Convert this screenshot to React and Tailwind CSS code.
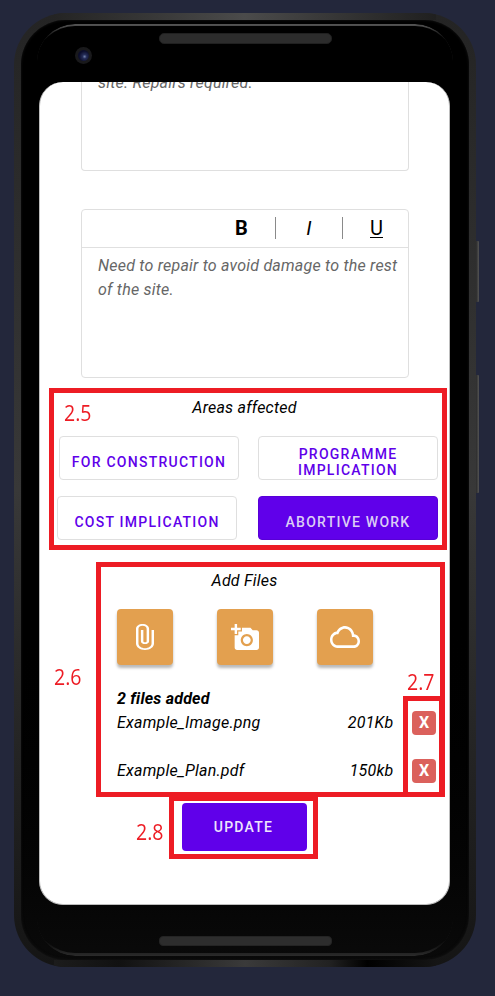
const outlineButton =
  'flex h-11 w-[180px] items-center justify-center rounded-[4px] border border-[#dfdfdf] px-8 pt-2 text-center text-sm leading-4 font-medium tracking-[1.25px] text-[#6000ea]';

function Toolbar() {
  return (
    <div className="flex h-[38px] items-center justify-end border-b border-[#e0e0e0] pb-[2px] text-[20px] leading-none text-black">
      <span className="w-[67px] text-center font-bold">B</span>
      <span className="h-[22px] w-px bg-[#8a8a8a]" />
      <span className="w-[66px] text-center italic">I</span>
      <span className="h-[22px] w-px bg-[#8a8a8a]" />
      <span className="flex w-[65px] justify-center pt-px pl-[2px]">
        <span className="border-b border-black leading-[18px]">U</span>
      </span>
    </div>
  );
}

function Tile({ children }) {
  return (
    <button className="flex size-14 items-center justify-center rounded-[4px] bg-[#e3a04f] text-white shadow-[0_3px_3px_rgba(0,0,0,0.28)]">
      {children}
    </button>
  );
}

function FileRow({ name, size }) {
  return (
    <div className="flex h-6 items-center">
      <span className="flex-1">{name}</span>
      <span>{size}</span>
      <button className="ml-[18.5px] flex size-6 items-center justify-center rounded-[4px] bg-[#db615c] font-bold not-italic tracking-normal text-white">
        X
      </button>
    </div>
  );
}

function Screen() {
  return (
    <div className="mx-[25px] h-[823px] w-[411px] overflow-hidden rounded-[24px] border-x border-b border-[#bdbdbd] bg-white text-base leading-6 tracking-[0.22px]">
      <div className="ml-[41px] flow-root h-[89px] w-[328px] rounded-b-[4px] border border-t-0 border-[#dfdfdf] pl-4 text-[#666] italic">
        <p className="-mt-[11px]">site. Repairs required.</p>
      </div>
      <div className="mt-[38px] ml-[41px] h-[169px] w-[328px] rounded-[4px] border border-[#dfdfdf]">
        <Toolbar />
        <p className="pt-[6px] pl-4 whitespace-nowrap text-[#666] italic">
          Need to repair to avoid damage to the rest
          <br />
          of the site.
        </p>
      </div>
      <h2 className="mt-[18px] italic text-center">Areas affected</h2>
      <div className="mt-4 flex justify-between pr-[11px] pl-[19px]">
        <button className={outlineButton + ' whitespace-nowrap'}>FOR CONSTRUCTION</button>
        <button className={outlineButton}>PROGRAMME IMPLICATION</button>
      </div>
      <div className="mt-4 flex justify-between pr-[11px] pl-[17px]">
        <button className={outlineButton + ' whitespace-nowrap'}>COST IMPLICATION</button>
        <button className="flex h-11 w-[180px] items-center justify-center rounded-[4px] border border-[#5800d6] bg-[#6000ea] pt-2 text-sm leading-4 font-medium tracking-[1.25px] text-[#dccdf5]">
          ABORTIVE WORK
        </button>
      </div>
      <h2 className="mt-[29px] italic text-center">Add Files</h2>
      <div className="mt-4 flex gap-[44px] pl-[77px]">
        <Tile>
          <svg width="18" height="26" viewBox="7 1 11 22" preserveAspectRatio="none" fill="currentColor">
            <path d="M16.5 6v11.5c0 2.21-1.79 4-4 4s-4-1.79-4-4V5c0-1.38 1.12-2.5 2.5-2.5s2.5 1.12 2.5 2.5v10.5c0 .55-.45 1-1 1s-1-.45-1-1V6H10v9.5c0 1.38 1.12 2.5 2.5 2.5s2.5-1.12 2.5-2.5V5c0-2.21-1.79-4-4-4S7 2.79 7 5v12.5c0 3.04 2.46 5.5 5.5 5.5s5.5-2.46 5.5-5.5V6z" />
          </svg>
        </Tile>
        <Tile>
          <svg width="28" height="26" viewBox="0 1 23 21" preserveAspectRatio="none" fill="currentColor">
            <path d="M3 4V1h2v3h3v2H5v3H3V6H0V4zm3 6V7h3V4h7l1.83 2H21c1.1 0 2 .9 2 2v12c0 1.1-.9 2-2 2H5c-1.1 0-2-.9-2-2V10zm7 9c2.76 0 5-2.24 5-5s-2.24-5-5-5-5 2.24-5 5 2.24 5 5 5zm-3.2-5c0 1.77 1.43 3.2 3.2 3.2s3.2-1.43 3.2-3.2-1.43-3.2-3.2-3.2-3.2 1.43-3.2 3.2z" />
          </svg>
        </Tile>
        <Tile>
          <svg width="30" height="22" viewBox="0 4 24 16" preserveAspectRatio="none" fill="currentColor">
            <path d="M19.35 10.04C18.67 6.59 15.64 4 12 4 9.11 4 6.6 5.64 5.35 8.04 2.34 8.36 0 10.91 0 14c0 3.31 2.69 6 6 6h13c2.76 0 5-2.24 5-5 0-2.64-2.05-4.78-4.65-4.96zM19 18H6c-2.21 0-4-1.79-4-4s1.79-4 4-4h.71C7.37 7.69 9.48 6 12 6c3.04 0 5.5 2.46 5.5 5.5v.5H19c1.66 0 3 1.34 3 3s-1.34 3-3 3z" />
          </svg>
        </Tile>
      </div>
      <div className="mt-[22px] flex flex-col pr-[13px] pl-[77px] italic">
        <p className="font-bold">2 files added</p>
        <FileRow name="Example_Image.png" size="201Kb" />
        <div className="h-6" />
        <FileRow name="Example_Plan.pdf" size="150kb" />
      </div>
      <button className="mt-5 ml-[142px] flex h-12 w-[125px] items-center justify-center rounded-[4px] bg-[#6000ea] pr-[2px] text-sm font-medium tracking-[1.25px] text-[#eee6fd]">
        UPDATE
      </button>
    </div>
  );
}

function Label({ children, className }) {
  return (
    <span
      className={
        "absolute origin-left scale-x-[0.93] font-['Open_Sans','Noto_Sans',sans-serif] text-[21px] leading-6 text-[#ed1c24] " +
        className
      }
    >
      {children}
    </span>
  );
}

export default function App() {
  return (
    <div className="relative h-[996px] w-[495px] overflow-hidden bg-[#23273b] pt-[13px] pl-[14px] font-[Roboto,sans-serif] text-black">
      <div className="absolute top-[241px] left-[474px] h-[61px] w-[5px] rounded-[1px] bg-linear-to-r from-[#111] to-[#555]" />
      <div className="absolute top-[375px] left-[474px] h-[118px] w-[5px] rounded-[1px] bg-linear-to-r from-[#111] to-[#555]" />

      <div className="relative flex h-[954px] w-[462px] flex-col overflow-hidden rounded-[52px] bg-linear-to-b from-[#242424] via-[#383838] to-[#151515] p-[7px]">
        <div className="absolute inset-x-[40px] top-0 h-[7px] bg-linear-to-r from-[#242424] via-[#4b4b4b] to-[#202020]" />
        <div className="absolute inset-x-[40px] bottom-0 h-[7px] bg-[linear-gradient(90deg,#1c1c1c_0%,#111_17%,#3a3a3a_50%,#222_72%,#000_82%,#151515_100%)]" />
        <div className="relative h-[940px] w-[448px] rounded-[45px] bg-linear-to-b from-black from-60% to-[#0a0a0a] shadow-[inset_0_0_3px_#151515]">
          <div className="absolute inset-x-[16px] top-[4px] h-[45px] rounded-t-[38px] border-t-[2.5px] border-[#555] mask-b-from-0% mask-b-to-35%" />
          <div className="absolute inset-x-[16px] bottom-[4px] h-[45px] rounded-b-[38px] border-b-[3px] border-[#2b2b2b] mask-t-from-0% mask-t-to-35%" />
          <div className="flex h-[62px] justify-center">
            <div className="absolute top-[27px] left-[54px] flex size-[17px] items-center justify-center rounded-full bg-[#19191b]">
              <div className="size-[11px] rounded-full bg-[radial-gradient(circle_at_60%_60%,#7180aa_0%,#252d58_22%,#0b0d2a_60%)]" />
            </div>
            <div className="mt-[13px] h-[11px] w-[173px] rounded-[5px] border border-[#202020] bg-[#2c2c2c]" />
          </div>
          <div className="-ml-[7px]">
            <Screen />
          </div>
          <div className="flex justify-center pt-[31px]">
            <div className="h-[10px] w-[173px] rounded-[4px] border border-[#242424] bg-[#2d2d2d]" />
          </div>
        </div>
      </div>

      <div className="absolute top-[388px] left-[49px] h-[162px] w-[398px] border-5 border-[#ed1c24]" />
      <div className="absolute top-[562px] left-[96px] h-[235px] w-[349px] border-5 border-[#ed1c24]" />
      <div className="absolute top-[696px] left-[403px] h-[101px] w-[41px] border-5 border-[#ed1c24]" />
      <div className="absolute top-[796px] left-[169px] h-[63px] w-[149px] border-5 border-[#ed1c24]" />
      <Label className="top-[401px] left-[64px]">2.5</Label>
      <Label className="top-[665px] left-[54px]">2.6</Label>
      <Label className="top-[670px] left-[407px]">2.7</Label>
      <Label className="top-[820px] left-[136px]">2.8</Label>
    </div>
  );
}
